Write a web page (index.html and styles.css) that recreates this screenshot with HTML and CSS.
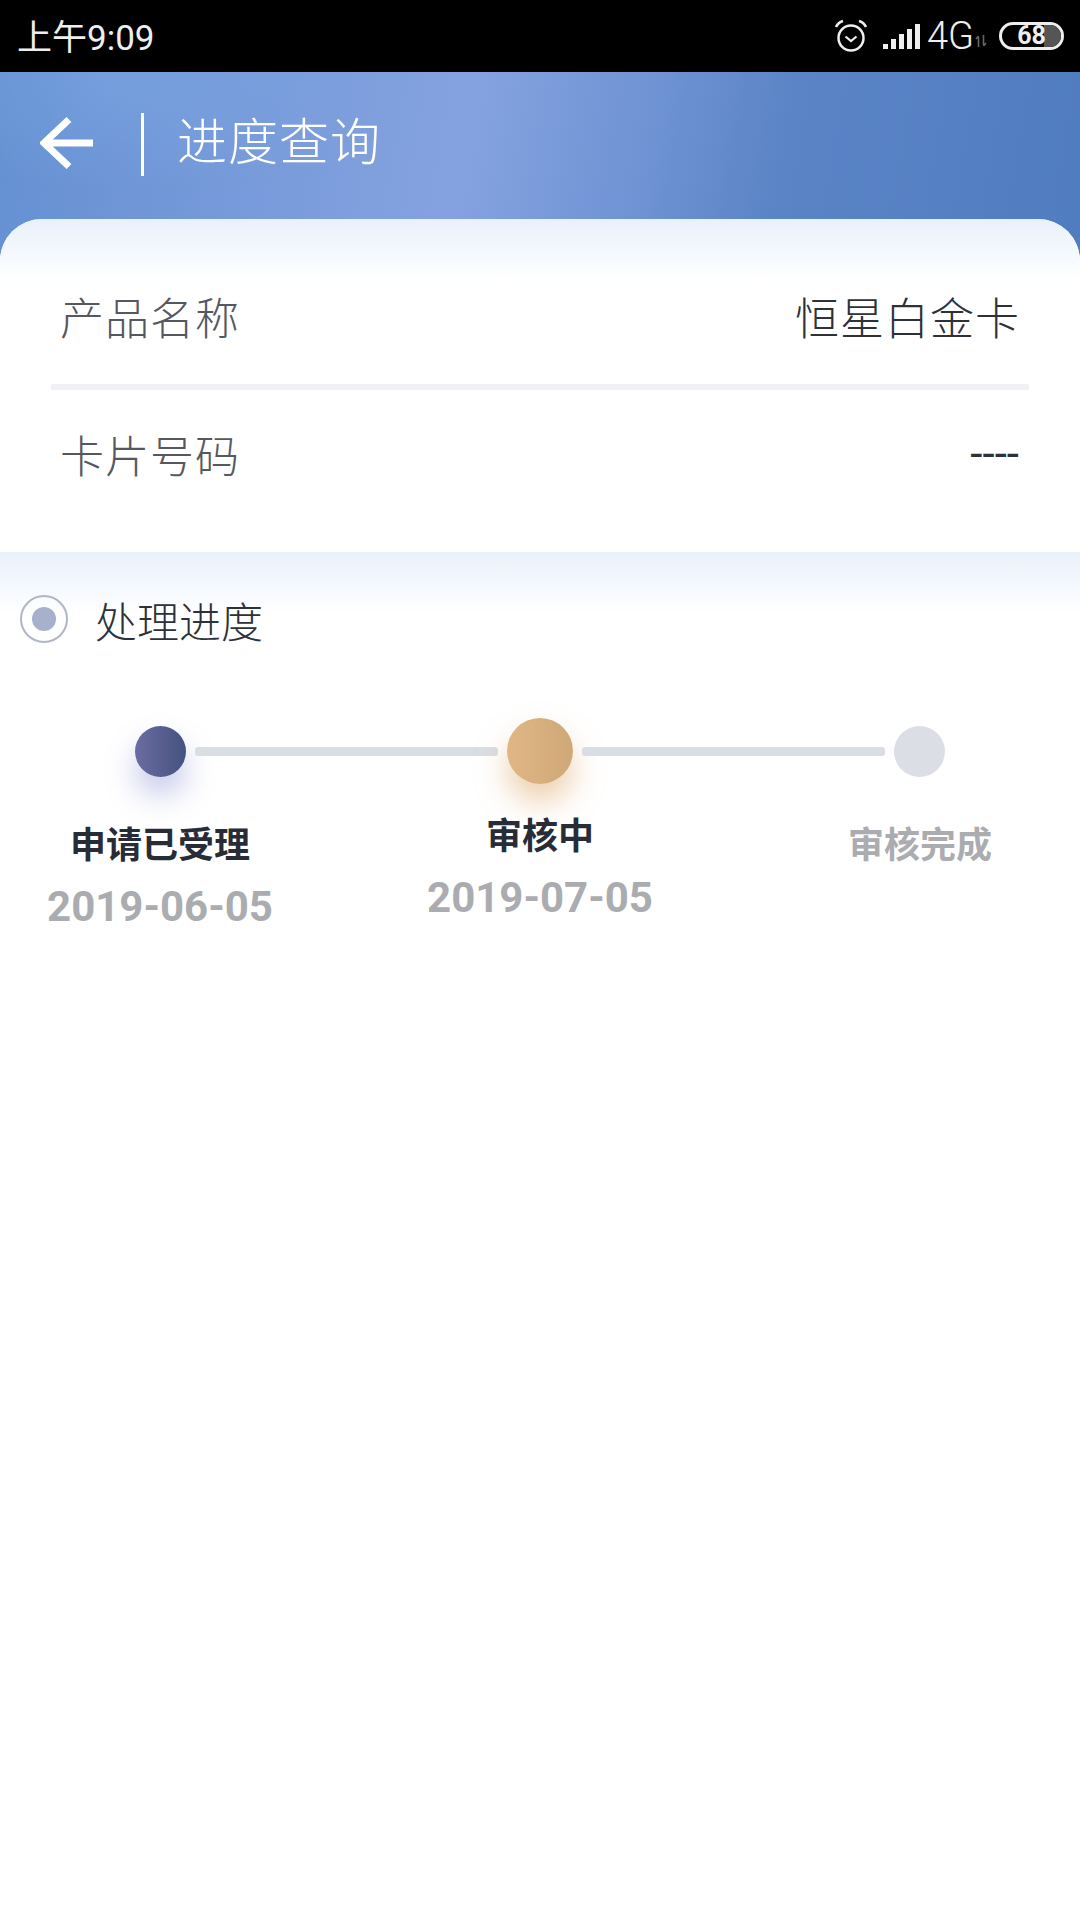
FILE: index.html
```html
<!DOCTYPE html>
<html>
<head>
    <meta charset="utf-8">
    <title>进度查询</title>
    <link rel="stylesheet" href="styles.css">
</head>
<body>
    <div class="status-bar">
        <div class="status-time">上午9:09</div>
        <div class="status-icons">
            <svg class="icon-alarm" width="34" height="34" viewBox="0 0 34 34">
                <circle cx="17" cy="19" r="12.5" fill="none" stroke="#eee" stroke-width="2.5"/>
                <path d="M11.5 17.5 L17 22 L22.5 17.5" fill="none" stroke="#eee" stroke-width="2.2"/>
                <path d="M2 8 Q4 3.5 9 2 M25 2 Q30 3.5 32 8" fill="none" stroke="#eee" stroke-width="2.6"/>
            </svg>
            <svg class="icon-signal" width="40" height="28" viewBox="0 0 40 28">
                <rect x="1" y="22" width="5" height="5" fill="#eee"/>
                <rect x="9" y="17" width="5" height="10" fill="#eee"/>
                <rect x="17" y="12" width="5" height="15" fill="#eee"/>
                <rect x="25" y="7" width="5" height="20" fill="#eee"/>
                <rect x="33" y="2" width="5" height="25" fill="#eee"/>
            </svg>
            <span class="net-label">4G</span>
            <svg class="icon-arrows" width="12" height="12" viewBox="0 0 12 12">
                <path d="M3.5 12 V2 M1 4 L3.5 1 M8.500 0 V10 M11 8 L8.500 11" fill="none" stroke="#666" stroke-width="1.6"/>
            </svg>
            <div class="battery">
                <div class="battery-rest"></div>
                <span class="battery-num">68</span>
            </div>
        </div>
    </div>

    <div class="app-header">
        <svg class="back-arrow" width="56" height="52" viewBox="0 0 56 52">
            <path d="M29 2.500 L4 26 L29 49.500 M4 26 H53" fill="none" stroke="#fff" stroke-width="7"/>
        </svg>
        <div class="header-line"></div>
        <div class="header-title">进度查询</div>
    </div>

    <div class="card">
        <div class="info-list">
            <div class="info-row row-first">
                <span class="info-label">产品名称</span>
                <span class="info-value">恒星白金卡</span>
            </div>
            <div class="info-divider"></div>
            <div class="info-row row-second">
                <span class="info-label">卡片号码</span>
                <span class="info-dash">----</span>
            </div>
        </div>

        <div class="progress">
            <div class="progress-title">
                <div class="radio"><div class="radio-dot"></div></div>
                <span class="title-text">处理进度</span>
            </div>

            <div class="track">
                <div class="dot dot-done"></div>
                <div class="track-line"></div>
                <div class="dot-big"></div>
                <div class="track-line"></div>
                <div class="dot dot-todo"></div>
            </div>

            <div class="steps">
                <div class="step">
                    <div class="step-name">申请已受理</div>
                    <div class="step-date">2019-06-05</div>
                </div>
                <div class="step step-active">
                    <div class="step-name">审核中</div>
                    <div class="step-date">2019-07-05</div>
                </div>
                <div class="step">
                    <div class="step-name step-name-todo">审核完成</div>
                </div>
            </div>
        </div>
    </div>
</body>
</html>
```

FILE: styles.css
```css
* {
    box-sizing: border-box;
}

body {
    margin: 0;
    width: 1080px;
    height: 1920px;
    overflow: hidden;
    background: #fff;
    font-family: "Noto Sans CJK SC", Roboto, sans-serif;
}

/* Status bar */
.status-bar {
    height: 72px;
    background: #000;
    color: #eee;
    display: flex;
    justify-content: space-between;
    align-items: center;
    padding: 0 16px 4px 17px;
}

.status-time {
    font-family: Roboto, "Noto Sans CJK SC", sans-serif;
    font-size: 35px;
    font-weight: 400;
}

.status-icons {
    display: flex;
    align-items: center;
    padding-top: 4px;
}

.icon-alarm {
    margin-right: 14px;
}

.net-label {
    font-family: Roboto, sans-serif;
    font-weight: 300;
    font-size: 38px;
    margin-left: 5px;
}

.icon-arrows {
    margin: 10px 12px 0 1px;
}

.battery {
    position: relative;
    width: 65px;
    height: 28px;
    border: 3px solid #eee;
    border-radius: 14px;
    display: flex;
    align-items: center;
    justify-content: center;
    overflow: hidden;
}

.battery-rest {
    position: absolute;
    top: 0;
    right: 0;
    width: 17px;
    height: 100%;
    background: #555;
}

.battery-num {
    position: relative;
    font-family: Roboto, sans-serif;
    font-weight: 700;
    font-size: 25px;
    line-height: 22px;
    color: #eee;
}

/* Header */
.app-header {
    height: 187px;
    padding: 0 0 42px 40px;
    display: flex;
    align-items: center;
    color: #fff;
    background:
        radial-gradient(ellipse 260px 120px at 130px 0px, rgba(125, 170, 228, 0.5), rgba(125, 170, 228, 0) 100%),
        linear-gradient(100deg, #6490d2 0%, #7b9cdb 28%, #84a2df 43%, #7194d4 58%, #5a84c6 72%, #507cc0 100%);
}

.back-arrow {
    margin-bottom: 4px;
}

.header-line {
    width: 3px;
    height: 63px;
    background: #fff;
    margin-left: 45px;
}

.header-title {
    font-size: 50px;
    font-weight: 300;
    letter-spacing: 1px;
    margin: 0 0 12px 33px;
    line-height: 63px;
}

/* Card */
.card {
    margin-top: -40px;
    position: relative;
    height: 1701px;
    background: #fff;
    border-radius: 42px 42px 0 0;
    overflow: hidden;
}

.info-list {
    height: 333px;
    padding: 0 51px;
    background: linear-gradient(to bottom, #e9f1fb, #fff 62px);
}

.info-row {
    display: flex;
    justify-content: space-between;
    align-items: center;
    padding: 0 9px 0 9px;
}

.row-first {
    height: 165px;
    padding-top: 28px;
}

.row-second {
    height: 133px;
    padding-bottom: 5px;
}

.info-divider {
    height: 6px;
    background: #f0f0f6;
}

.info-label {
    font-size: 44px;
    font-weight: 300;
    letter-spacing: 1px;
    color: #55585e;
}

.info-value {
    font-size: 44px;
    font-weight: 300;
    letter-spacing: 1px;
    color: #2d3138;
}

.info-dash {
    font-family: Roboto, sans-serif;
    font-size: 44px;
    margin-right: 1px;
    color: #2d3138;
}

/* Progress */
.progress {
    background: linear-gradient(to bottom, #e9f1fb, #fff 62px);
    padding-top: 43px;
}

.progress-title {
    display: flex;
    align-items: center;
    padding-left: 20px;
    height: 48px;
}

.radio {
    width: 48px;
    height: 48px;
    border: 2px solid #b0b6c4;
    border-radius: 50%;
    display: flex;
    align-items: center;
    justify-content: center;
}

.radio-dot {
    width: 24px;
    height: 24px;
    border-radius: 50%;
    background: #a7b1cb;
}

.title-text {
    margin-left: 27px;
    font-size: 42px;
    font-weight: 300;
    color: #2d3138;
}

.track {
    display: flex;
    align-items: center;
    height: 66px;
    margin-top: 75px;
    padding-left: 135px;
}

.dot {
    width: 51px;
    height: 51px;
    border-radius: 50%;
}

.dot-done {
    background: linear-gradient(to right, #6c6ca2, #44527f);
    box-shadow: 0 18px 30px rgba(105, 115, 200, 0.38);
}

.dot-big {
    width: 66px;
    height: 66px;
    border-radius: 50%;
    background: linear-gradient(to right, #e0b685, #cfa877);
    box-shadow: 0 18px 30px rgba(222, 170, 110, 0.55);
}

.dot-todo {
    background: #dcdee6;
}

.track-line {
    width: 303px;
    height: 9px;
    margin: 0 9px;
    border-radius: 3px;
    background: #d9dee4;
}

.steps {
    display: flex;
    padding-left: 40px;
    margin-top: 33px;
}

.step {
    width: 240px;
    text-align: center;
}

.step + .step {
    margin-left: 140px;
}

.step-active {
    margin-top: -9px;
}

.step-name {
    font-size: 36px;
    line-height: 50px;
    font-weight: 700;
    color: #272c36;
    white-space: nowrap;
}

.step-name-todo {
    color: #aaacaf;
}

.step-date {
    font-family: Roboto, sans-serif;
    font-size: 42px;
    font-weight: 700;
    line-height: 50px;
    margin-top: 15px;
    color: #aaacaf;
    white-space: nowrap;
}
```
